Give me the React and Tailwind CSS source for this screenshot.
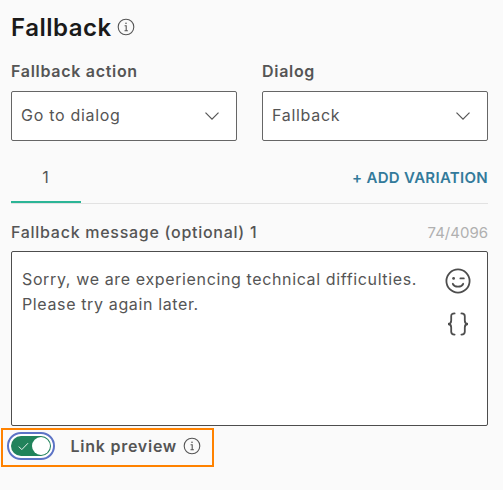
import { useState } from "react";

function InfoIcon() {
  return (
    <svg width="18" height="18" viewBox="0 0 18 18" fill="none" stroke="#555" strokeWidth="1.1" className="shrink-0">
      <circle cx="9" cy="9" r="7.8" />
      <path d="M7.6 7.8H9.2V12.6M7.5 12.7H10.9" />
      <circle cx="9" cy="5.2" r="0.8" fill="#555" stroke="none" />
    </svg>
  );
}

function SelectField({ label, value }) {
  return (
    <div className="flex flex-1 flex-col">
      <span className="h-5 text-base leading-5 font-semibold tracking-[0.7px]">{label}</span>
      <button className="mt-[10px] flex h-[50px] items-center justify-between rounded-[2px] border border-[#666] bg-white pr-4 pl-[9px] text-base tracking-[0.7px]">
        <span className="-mt-[2px]">{value}</span>
        <svg width="16" height="10" viewBox="0 0 16 10" fill="none" stroke="#555" strokeWidth="1.2">
          <path d="M1.5 1.7L8 8.2L14.5 1.7" />
        </svg>
      </button>
    </div>
  );
}

function SmileyIcon() {
  return (
    <svg width="26" height="26" viewBox="0 0 26 26" fill="none" stroke="#4d4d4d" strokeWidth="1.8" strokeLinecap="round">
      <circle cx="13" cy="13" r="11.6" />
      <path d="M7.8 15.8C9.4 19.6 16.6 19.6 18.2 15.8" />
      <path d="M15.4 10.4H18.8" />
      <circle cx="8.6" cy="10.4" r="1.4" fill="#4d4d4d" stroke="none" />
    </svg>
  );
}

function BracesIcon() {
  return (
    <svg width="26" height="26" viewBox="0 0 26 26" fill="none" stroke="#4d4d4d" strokeWidth="1.8" strokeLinecap="round">
      <path d="M9.6 2.4C7 2.4 6.2 3.4 6.2 5.2V9.6C6.2 11.6 5 13 3 13C5 13 6.2 14.4 6.2 16.4V20.8C6.2 22.6 7 23.6 9.6 23.6" />
      <path d="M16.4 2.4C19 2.4 19.8 3.4 19.8 5.2V9.6C19.8 11.6 21 13 23 13C21 13 19.8 14.4 19.8 16.4V20.8C19.8 22.6 19 23.6 16.4 23.6" />
    </svg>
  );
}

function Toggle({ checked, onChange }) {
  return (
    <button
      role="switch"
      aria-checked={checked}
      onClick={() => onChange(!checked)}
      className="flex h-7 w-12 items-center rounded-full border-2 border-[#5c73c5] bg-white p-[2px]"
    >
      <span
        className={`flex h-5 w-10 items-center rounded-full pr-px pl-[7px] ${
          checked ? "justify-between bg-[#21835b]" : "justify-start bg-gray-400"
        }`}
      >
        {checked && (
          <svg width="11" height="9" viewBox="0 0 11 9" fill="none" stroke="white" strokeWidth="0.9">
            <path d="M0.8 4.6L3.8 7.6L10 1.2" />
          </svg>
        )}
        <span className="size-[18px] rounded-full bg-white" />
      </span>
    </button>
  );
}

export default function App() {
  const [linkPreview, setLinkPreview] = useState(true);

  return (
    <div className="h-[490px] w-[503px] bg-[#fafafa] pt-3 pr-[15px] pl-[11px] font-['Inter',sans-serif] text-[#555]">
      <div className="flex h-[30px] items-center gap-[5px]">
        <h1 className="pt-px text-2xl leading-[30px] font-semibold tracking-[0.5px] text-[#1a1a1a]">Fallback</h1>
        <InfoIcon />
      </div>

      <div className="mt-[19px] flex gap-[25px]">
        <SelectField label="Fallback action" value="Go to dialog" />
        <SelectField label="Dialog" value="Fallback" />
      </div>

      {/* Variation tabs */}
      <div className="mt-[11px] flex h-[52px] items-end justify-between border-b border-[#e2e2e2]">
        <button className="flex h-[51px] w-[70px] items-center justify-center border-b-2 border-[#2bb596] pr-px text-base">
          1
        </button>
        <button className="mb-[15px] text-[15px] leading-5 font-semibold tracking-[0.3px] text-[#337a9b]">
          + ADD VARIATION
        </button>
      </div>

      <div className="mt-[18px] flex h-5 items-center justify-between">
        <span className="text-base leading-5 font-medium tracking-[0.72px]">Fallback message (optional) 1</span>
        <span className="pt-px text-[15px] leading-5 text-[#b0b0b0]">74/4096</span>
      </div>

      <div className="mt-[9px] flex h-[175px] justify-between rounded-[2px] border border-[#4d4d4d] bg-white pt-4 pr-4 pl-[10px]">
        <p className="-mt-px text-base leading-[25px] tracking-[0.63px] whitespace-nowrap">
          Sorry, we are experiencing technical difficulties.
          <br />
          Please try again later.
        </p>
        <div className="flex flex-col gap-[17px]">
          <SmileyIcon />
          <BracesIcon />
        </div>
      </div>

      <div className="mt-[2px] -ml-[10px] flex h-[39px] w-[213px] items-center border-2 border-[#ff8200] pb-[3px] pl-1">
        <Toggle checked={linkPreview} onChange={setLinkPreview} />
        <span className="ml-[15.5px] mr-[5.5px] text-base font-semibold tracking-[0.75px] whitespace-nowrap">Link preview</span>
        <InfoIcon />
      </div>
    </div>
  );
}
